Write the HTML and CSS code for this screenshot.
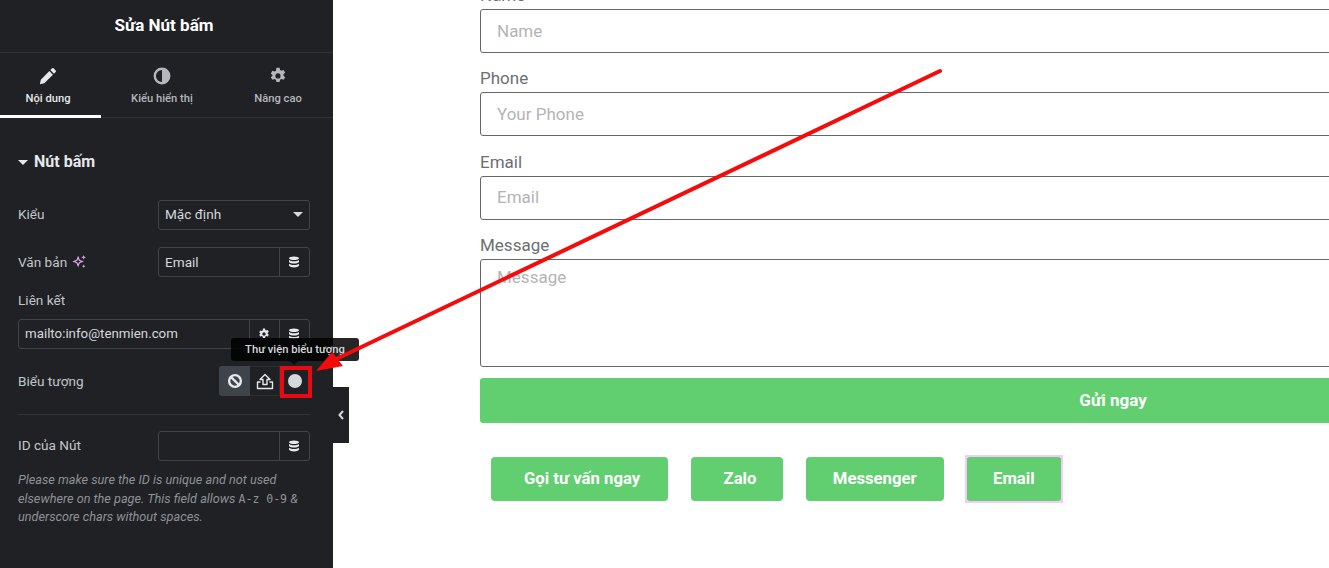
FILE: index.html
```html
<!DOCTYPE html>
<html lang="en">
<head>
    <meta charset="UTF-8">
    <title>Sửa Nút bấm</title>
    <link rel="stylesheet" href="styles.css">
</head>
<body>

<aside class="panel">
    <div class="panel-title">Sửa Nút bấm</div>

    <div class="tabs">
        <div class="tab tab-content active">
            <svg class="tab-icon" viewBox="0 0 16 16"><path d="M11.600 1.200a1 1 0 0 1 1.400 0l1.800 1.800a1 1 0 0 1 0 1.400l-1.500 1.500-3.200-3.200zM9.200 3.600l3.200 3.200-7.700 7.700-3.900.9.800-4z" fill="currentColor"/></svg>
            <span>Nội dung</span>
        </div>
        <div class="tab tab-style">
            <svg class="tab-icon" viewBox="0 0 16 16"><path fill-rule="evenodd" d="M8 .5a7.500 7.500 0 1 1 0 15 7.500 7.500 0 0 1 0-15zM8 2.600a5.400 5.400 0 0 0 0 10.800z" fill="currentColor"/></svg>
            <span>Kiểu hiển thị</span>
        </div>
        <div class="tab tab-advanced">
            <svg class="tab-icon" viewBox="0 0 16 16"><use href="#gear"/></svg>
            <span>Nâng cao</span>
        </div>
    </div>

    <div class="section-head"><span class="caret"></span>Nút bấm</div>

    <div class="field field-kieu">
        <label>Kiểu</label>
        <div class="select">Mặc định<span class="caret small"></span></div>
    </div>

    <div class="field field-text">
        <label>Văn bản
            <svg class="ai-icon" viewBox="0 0 16 16"><path d="M6.500 3.500l1.300 3.200 3.200 1.300-3.200 1.300-1.300 3.200-1.300-3.200L2 8l3.200-1.300z" fill="none" stroke="#d7a6e6" stroke-width="1.300"/><path d="M12.500 1l.7 1.800 1.800.7-1.800.7-.7 1.800-.7-1.800-1.800-.7 1.800-.7zM12.500 11l.6 1.400 1.400.6-1.400.6-.6 1.400-.6-1.400-1.400-.6 1.400-.6z" fill="#d7a6e6"/></svg>
        </label>
        <div class="input-group">
            <div class="input-cell">Email</div>
            <div class="addon"><svg class="db-icon" viewBox="0 0 12 12"><use href="#db"/></svg></div>
        </div>
    </div>

    <div class="link-label">Liên kết</div>
    <div class="input-group link-group">
        <div class="input-cell">mailto:info@tenmien.com</div>
        <div class="addon"><svg class="db-icon" viewBox="0 0 16 16"><use href="#gear"/></svg></div>
        <div class="addon"><svg class="db-icon" viewBox="0 0 12 12"><use href="#db"/></svg></div>
    </div>

    <div class="field field-icon">
        <label>Biểu tượng</label>
        <div class="choices">
            <div class="choice selected">
                <svg viewBox="0 0 16 16" class="choice-icon"><circle cx="8" cy="8" r="5.900" fill="none" stroke="currentColor" stroke-width="2.400"/><path d="M4 4l8 8" stroke="currentColor" stroke-width="2.400"/></svg>
            </div>
            <div class="choice">
                <svg viewBox="0 0 18 16" class="choice-icon wide"><path d="M9 1l5 5h-3v5H7V6H4zM4.500 8.500h-3V15h15V8.500h-3" fill="none" stroke="currentColor" stroke-width="1.400" stroke-linejoin="round"/></svg>
            </div>
            <div class="choice">
                <span class="dot"></span>
            </div>
        </div>
    </div>

    <div class="divider"></div>

    <div class="field field-id">
        <label>ID của Nút</label>
        <div class="input-group">
            <div class="input-cell"></div>
            <div class="addon"><svg class="db-icon" viewBox="0 0 12 12"><use href="#db"/></svg></div>
        </div>
    </div>

    <p class="note">Please make sure the ID is unique and not used elsewhere on the page. This field allows <code>A-z 0-9</code> &amp; underscore chars without spaces.</p>

    <div class="tooltip">Thư viện biểu tượng</div>
    <div class="red-box"></div>
    <div class="collapse"><svg viewBox="0 0 8 12"><path d="M6 2L2.500 6 6 10" fill="none" stroke="currentColor" stroke-width="2"/></svg></div>
</aside>

<main class="page">
    <form class="form">
        <label class="f-label">Name</label>
        <div class="f-input">Name</div>
        <label class="f-label">Phone</label>
        <div class="f-input">Your Phone</div>
        <label class="f-label f-label-email">Email</label>
        <div class="f-input">Email</div>
        <label class="f-label">Message</label>
        <div class="f-input f-area">Message</div>
        <div class="f-submit">Gửi ngay</div>
    </form>
    <div class="buttons">
        <a class="btn btn-call">Gọi tư vấn ngay</a>
        <a class="btn btn-zalo">Zalo</a>
        <a class="btn">Messenger</a>
        <a class="btn btn-selected">Email</a>
    </div>
</main>

<svg class="arrow" viewBox="0 0 1329 568" width="1329" height="568">
    <path d="M940 71L330 362" stroke="#f40b0b" stroke-width="4" stroke-linecap="round"/>
    <path d="M316 371L332 352L343 366z" fill="#f40b0b"/>
</svg>

<svg class="defs" width="0" height="0">
    <symbol id="db" viewBox="0 0 12 12">
        <path d="M6 .5c2.800 0 5 .8 5 1.800S8.800 4.100 6 4.100 1 3.300 1 2.300 3.200.5 6 .5zM1 4c1 .9 3 1.300 5 1.300S10 4.900 11 4v1.800c0 1-2.200 1.800-5 1.800s-5-.8-5-1.800zM1 7.700c1 .9 3 1.300 5 1.300s4-.4 5-1.300v1.900c0 1-2.200 1.900-5 1.900s-5-.9-5-1.900z" fill="currentColor"/>
    </symbol>
    <symbol id="gear" viewBox="0 0 16 16">
        <path fill-rule="evenodd" d="M6.600.6h2.800l.4 2 1.300.7 1.900-.7 1.400 2.400-1.500 1.300v1.400l1.500 1.300-1.400 2.400-1.900-.7-1.300.7-.4 2H6.600l-.4-2-1.300-.7-1.900.7-1.400-2.400 1.500-1.300V7.100L1.600 5.800 3 3.400l1.900.7 1.300-.7zM8 5.600a2.300 2.300 0 1 0 0 4.600 2.300 2.300 0 0 0 0-4.600z" fill="currentColor"/>
    </symbol>
</svg>

</body>
</html>
```

FILE: styles.css
```css
* {
    box-sizing: border-box;
}
html, body {
    margin: 0;
    padding: 0;
    height: 568px;
    overflow: hidden;
}
body {
    display: flex;
    position: relative;
    background-color: #fff;
    font-family: Roboto, "Liberation Sans", sans-serif;
}

/* left panel */
.panel {
    position: relative;
    width: 333px;
    flex: none;
    background-color: #1f2124;
    color: #d5d8dc;
    font-size: 13.600px;
}
.panel-title {
    height: 53px;
    padding-right: 5px;
    border-bottom: 1px solid #2f3236;
    color: #fff;
    font-size: 17px;
    font-weight: 700;
    line-height: 51px;
    text-align: center;
}
.tabs {
    display: flex;
    height: 65px;
    border-bottom: 1px solid #2f3236;
}
.tab {
    display: flex;
    flex-direction: column;
    align-items: center;
    padding-top: 14px;
    color: #b4b8bd;
    font-size: 11.200px;
    font-weight: 500;
}
.tab span {
    margin-top: 7px;
}
.tab-content {
    width: 101px;
    padding-right: 5px;
}
.tab-style {
    width: 122px;
}
.tab-advanced {
    width: 110px;
}
.tab.active {
    color: #e6e8ea;
    border-bottom: 3px solid #fff;
    height: 65px;
}
.tab-icon {
    width: 18px;
    height: 18px;
}
.section-head {
    display: flex;
    align-items: center;
    margin: 34px 18px 0;
    color: #e6e8ea;
    font-size: 16px;
    font-weight: 700;
    line-height: 20px;
}
.caret {
    display: inline-block;
    width: 0;
    height: 0;
    margin-right: 6px;
    border-left: 5px solid transparent;
    border-right: 5px solid transparent;
    border-top: 5px solid #e6e8ea;
}
.caret.small {
    margin: 0;
    border-top-color: #d5d8dc;
}
.field {
    display: flex;
    align-items: center;
    justify-content: space-between;
    margin: 0 23px 0 18px;
    height: 30px;
}
.field label {
    display: flex;
    align-items: center;
    gap: 5px;
    margin-bottom: 1px;
    color: #c2c6cb;
}
.field-kieu label, .field-id label {
    margin-bottom: 2px;
}
.field-kieu {
    margin-top: 28px;
}
.field-text {
    margin-top: 17px;
}
.select, .input-group {
    display: flex;
    width: 152px;
    height: 30px;
    border: 1px solid #3f444b;
    border-radius: 3px;
}
.select {
    align-items: center;
    justify-content: space-between;
    padding: 0 6px 2px;
}
.input-cell {
    flex: 1;
    min-width: 0;
    padding: 0 6px;
    line-height: 28px;
    white-space: nowrap;
}
.addon {
    display: flex;
    align-items: center;
    justify-content: center;
    width: 30px;
    padding-right: 1px;
    flex: none;
    border-left: 1px solid #3f444b;
    color: #e6e8ea;
}
.db-icon {
    width: 12px;
    height: 12px;
}
.ai-icon {
    width: 15px;
    height: 15px;
}
.link-label {
    margin: 15px 18px 0;
    height: 17px;
    line-height: 17px;
    color: #c2c6cb;
}
.link-group {
    width: auto;
    margin: 10px 23px 0 18px;
    font-size: 13.300px;
}
.field-icon {
    margin-top: 17px;
}
.choices {
    display: flex;
    height: 30px;
    border-radius: 3px;
    overflow: hidden;
}
.choice {
    display: flex;
    align-items: center;
    justify-content: center;
    width: 30px;
    border: 1px solid #2c2f33;
    border-left: 0;
    color: #e6e8ea;
}
.choice.selected {
    width: 31px;
    border: 0;
    background-color: #3f444b;
}
.choice-icon {
    width: 16px;
    height: 16px;
}
.choice-icon.wide {
    width: 18px;
    height: 17px;
}
.dot {
    width: 14px;
    height: 14px;
    border-radius: 50%;
    background-color: #d5d8dc;
}
.divider {
    margin: 18px 23px 0 18px;
    border-top: 1px solid #2f3236;
}
.field-id {
    margin-top: 16px;
}
.note {
    margin: 10px 23px 0 18px;
    color: #8e9297;
    font-size: 12.700px;
    font-style: italic;
    line-height: 18.500px;
}
.note code {
    font-family: "DejaVu Sans Mono", monospace;
    font-style: normal;
    font-size: 11.500px;
    line-height: 1;
}
.tooltip {
    position: absolute;
    left: 231px;
    top: 338px;
    width: 128px;
    height: 23px;
    border-radius: 3px;
    background-color: rgba(0, 0, 0, 0.85);
    color: #d5d8dc;
    font-size: 11.200px;
    font-weight: 500;
    line-height: 23px;
    text-align: center;
}
.tooltip::after {
    content: "";
    position: absolute;
    left: 59px;
    bottom: -4px;
    border-left: 4px solid transparent;
    border-right: 4px solid transparent;
    border-top: 4px solid #0b0b0c;
}
.red-box {
    position: absolute;
    left: 280px;
    top: 366px;
    width: 32px;
    height: 32px;
    border: 4px solid #e80a10;
}
.collapse {
    position: absolute;
    left: 333px;
    top: 387px;
    display: flex;
    align-items: center;
    justify-content: center;
    width: 16px;
    height: 56px;
    background-color: #1f2124;
    color: #d5d8dc;
}
.collapse svg {
    width: 8px;
    height: 12px;
}

/* page preview */
.page {
    flex: 1;
    min-width: 0;
    overflow: hidden;
    padding-left: 147px;
}
.form {
    width: 1266px;
    margin-top: -30px;
}
.f-label {
    display: block;
    height: 24px;
    margin-top: 15px;
    color: #6b6f73;
    font-size: 17px;
    line-height: 20px;
}
.f-label-email {
    margin-top: 16px;
}
.f-input {
    height: 44px;
    padding: 0 16px;
    border: 1px solid #666;
    border-radius: 3px;
    color: #b4b4b4;
    font-size: 17px;
    line-height: 42px;
}
.f-label-email + .f-input {
    line-height: 41px;
}
.f-area {
    height: 108px;
    line-height: 34px;
}
.f-submit {
    height: 45px;
    margin-top: 11px;
    border-radius: 3px;
    background-color: #61ce70;
    color: #fff;
    font-size: 17px;
    font-weight: 700;
    line-height: 44px;
    text-align: center;
}
.buttons {
    display: flex;
    gap: 22.400px;
    margin: 34px 0 0 11px;
}
.btn {
    display: block;
    position: relative;
    height: 44px;
    padding: 0 27px;
    border-radius: 4px;
    background-color: #61ce70;
    color: #fff;
    font-size: 16.700px;
    font-weight: 700;
    line-height: 43px;
}
.btn-call {
    padding: 0 28px 0 33px;
}
.btn-zalo {
    padding: 0 27px 0 33px;
}
.btn-selected::after {
    content: "";
    position: absolute;
    inset: -2px -1.500px -2px -1.500px;
    border: 2px solid #f6c8fb;
}

.arrow {
    position: absolute;
    left: 0;
    top: 0;
    pointer-events: none;
}
.defs {
    position: absolute;
}
```
